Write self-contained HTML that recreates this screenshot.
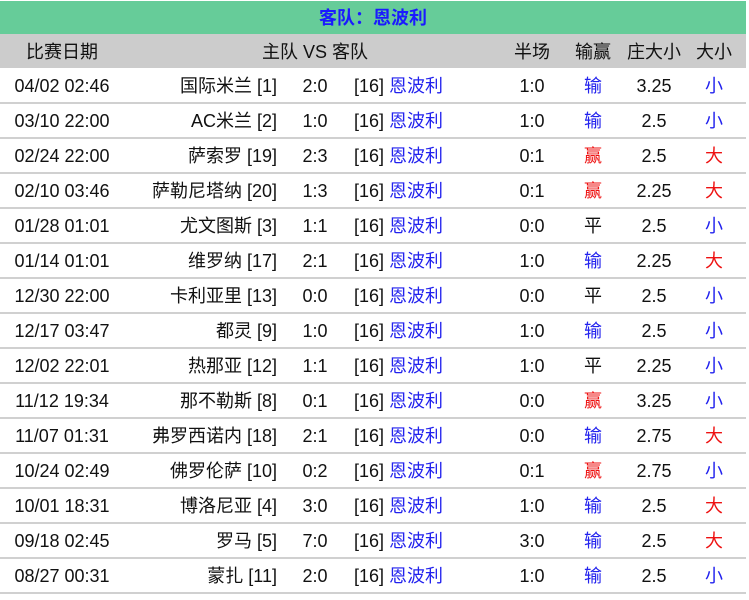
<!DOCTYPE html>
<html><head><meta charset="utf-8"><style>
body{margin:0;background:#fff;font-family:"Liberation Sans","Noto Sans CJK SC",sans-serif;font-size:18px;color:#111;}
.w{position:relative;width:746px;}
.t{position:absolute;left:0;top:1px;width:746px;height:33px;background:#66cc99;color:#1a1aff;font-weight:bold;text-align:center;line-height:35px;}
.h{position:absolute;left:0;top:34px;width:746px;height:34px;background:#cccccc;}
.r{position:absolute;left:0;width:746px;height:34px;border-bottom:2px solid #d0d0d0;}
.c{position:absolute;top:0;line-height:36px;white-space:nowrap;transform:translateX(-50%);}
.rt{position:absolute;top:0;line-height:36px;white-space:nowrap;right:469px;}
.lt{position:absolute;top:0;line-height:36px;white-space:nowrap;left:354px;}
.b{color:#2222ee}.red{color:#ee1111}
</style></head><body><div class="w">
<div class="t">客队：恩波利</div>
<div class="h">
<span class="c" style="left:62px">比赛日期</span>
<span class="c" style="left:315px">主队 VS 客队</span>
<span class="c" style="left:532px">半场</span>
<span class="c" style="left:593px">输赢</span>
<span class="c" style="left:654px">庄大小</span>
<span class="c" style="left:714px">大小</span>
</div>
<div id="rows"></div>
</div>
<div class="w">
<div class="r" style="top:68px"><span class="c" style="left:62px">04/02 02:46</span><span class="rt">国际米兰 [1]</span><span class="c" style="left:315px">2:0</span><span class="lt">[16] <span class="b">恩波利</span></span><span class="c" style="left:532px">1:0</span><span class="c b" style="left:593px">输</span><span class="c" style="left:654px">3.25</span><span class="c b" style="left:714px">小</span></div>
<div class="r" style="top:103px"><span class="c" style="left:62px">03/10 22:00</span><span class="rt">AC米兰 [2]</span><span class="c" style="left:315px">1:0</span><span class="lt">[16] <span class="b">恩波利</span></span><span class="c" style="left:532px">1:0</span><span class="c b" style="left:593px">输</span><span class="c" style="left:654px">2.5</span><span class="c b" style="left:714px">小</span></div>
<div class="r" style="top:138px"><span class="c" style="left:62px">02/24 22:00</span><span class="rt">萨索罗 [19]</span><span class="c" style="left:315px">2:3</span><span class="lt">[16] <span class="b">恩波利</span></span><span class="c" style="left:532px">0:1</span><span class="c red" style="left:593px">赢</span><span class="c" style="left:654px">2.5</span><span class="c red" style="left:714px">大</span></div>
<div class="r" style="top:173px"><span class="c" style="left:62px">02/10 03:46</span><span class="rt">萨勒尼塔纳 [20]</span><span class="c" style="left:315px">1:3</span><span class="lt">[16] <span class="b">恩波利</span></span><span class="c" style="left:532px">0:1</span><span class="c red" style="left:593px">赢</span><span class="c" style="left:654px">2.25</span><span class="c red" style="left:714px">大</span></div>
<div class="r" style="top:208px"><span class="c" style="left:62px">01/28 01:01</span><span class="rt">尤文图斯 [3]</span><span class="c" style="left:315px">1:1</span><span class="lt">[16] <span class="b">恩波利</span></span><span class="c" style="left:532px">0:0</span><span class="c" style="left:593px">平</span><span class="c" style="left:654px">2.5</span><span class="c b" style="left:714px">小</span></div>
<div class="r" style="top:243px"><span class="c" style="left:62px">01/14 01:01</span><span class="rt">维罗纳 [17]</span><span class="c" style="left:315px">2:1</span><span class="lt">[16] <span class="b">恩波利</span></span><span class="c" style="left:532px">1:0</span><span class="c b" style="left:593px">输</span><span class="c" style="left:654px">2.25</span><span class="c red" style="left:714px">大</span></div>
<div class="r" style="top:278px"><span class="c" style="left:62px">12/30 22:00</span><span class="rt">卡利亚里 [13]</span><span class="c" style="left:315px">0:0</span><span class="lt">[16] <span class="b">恩波利</span></span><span class="c" style="left:532px">0:0</span><span class="c" style="left:593px">平</span><span class="c" style="left:654px">2.5</span><span class="c b" style="left:714px">小</span></div>
<div class="r" style="top:313px"><span class="c" style="left:62px">12/17 03:47</span><span class="rt">都灵 [9]</span><span class="c" style="left:315px">1:0</span><span class="lt">[16] <span class="b">恩波利</span></span><span class="c" style="left:532px">1:0</span><span class="c b" style="left:593px">输</span><span class="c" style="left:654px">2.5</span><span class="c b" style="left:714px">小</span></div>
<div class="r" style="top:348px"><span class="c" style="left:62px">12/02 22:01</span><span class="rt">热那亚 [12]</span><span class="c" style="left:315px">1:1</span><span class="lt">[16] <span class="b">恩波利</span></span><span class="c" style="left:532px">1:0</span><span class="c" style="left:593px">平</span><span class="c" style="left:654px">2.25</span><span class="c b" style="left:714px">小</span></div>
<div class="r" style="top:383px"><span class="c" style="left:62px">11/12 19:34</span><span class="rt">那不勒斯 [8]</span><span class="c" style="left:315px">0:1</span><span class="lt">[16] <span class="b">恩波利</span></span><span class="c" style="left:532px">0:0</span><span class="c red" style="left:593px">赢</span><span class="c" style="left:654px">3.25</span><span class="c b" style="left:714px">小</span></div>
<div class="r" style="top:418px"><span class="c" style="left:62px">11/07 01:31</span><span class="rt">弗罗西诺内 [18]</span><span class="c" style="left:315px">2:1</span><span class="lt">[16] <span class="b">恩波利</span></span><span class="c" style="left:532px">0:0</span><span class="c b" style="left:593px">输</span><span class="c" style="left:654px">2.75</span><span class="c red" style="left:714px">大</span></div>
<div class="r" style="top:453px"><span class="c" style="left:62px">10/24 02:49</span><span class="rt">佛罗伦萨 [10]</span><span class="c" style="left:315px">0:2</span><span class="lt">[16] <span class="b">恩波利</span></span><span class="c" style="left:532px">0:1</span><span class="c red" style="left:593px">赢</span><span class="c" style="left:654px">2.75</span><span class="c b" style="left:714px">小</span></div>
<div class="r" style="top:488px"><span class="c" style="left:62px">10/01 18:31</span><span class="rt">博洛尼亚 [4]</span><span class="c" style="left:315px">3:0</span><span class="lt">[16] <span class="b">恩波利</span></span><span class="c" style="left:532px">1:0</span><span class="c b" style="left:593px">输</span><span class="c" style="left:654px">2.5</span><span class="c red" style="left:714px">大</span></div>
<div class="r" style="top:523px"><span class="c" style="left:62px">09/18 02:45</span><span class="rt">罗马 [5]</span><span class="c" style="left:315px">7:0</span><span class="lt">[16] <span class="b">恩波利</span></span><span class="c" style="left:532px">3:0</span><span class="c b" style="left:593px">输</span><span class="c" style="left:654px">2.5</span><span class="c red" style="left:714px">大</span></div>
<div class="r" style="top:558px"><span class="c" style="left:62px">08/27 00:31</span><span class="rt">蒙扎 [11]</span><span class="c" style="left:315px">2:0</span><span class="lt">[16] <span class="b">恩波利</span></span><span class="c" style="left:532px">1:0</span><span class="c b" style="left:593px">输</span><span class="c" style="left:654px">2.5</span><span class="c b" style="left:714px">小</span></div>
</div>
</body></html>
